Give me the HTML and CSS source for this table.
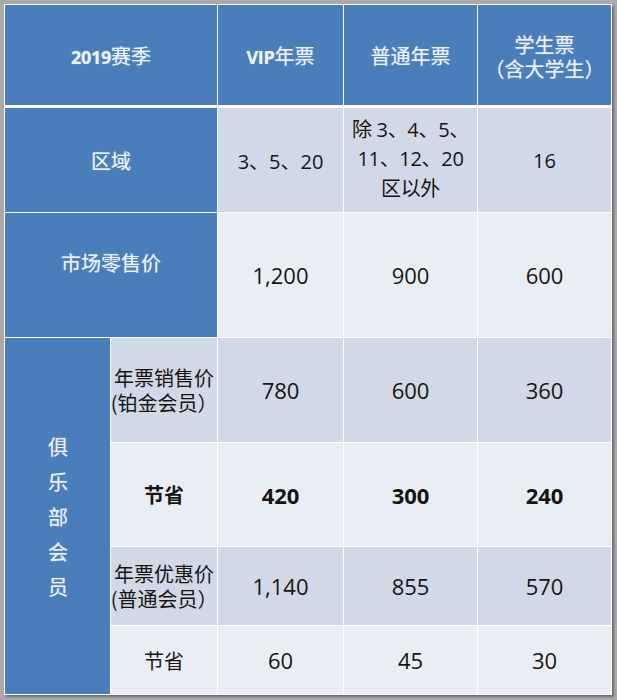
FILE: index.html
```html
<!DOCTYPE html>
<html lang="zh-CN">
<head>
<meta charset="utf-8">
<title>2019赛季 年票价格</title>
<link rel="stylesheet" href="styles.css">
</head>
<body>
<div class="frame">
  <div class="table">
    <div class="cell head span2"><span><b class="lat">2019</b>赛季</span></div>
    <div class="cell head"><span><b class="lat">VIP</b>年票</span></div>
    <div class="cell head"><span>普通年票</span></div>
    <div class="cell head two"><span>学生票<br>（含大学生）</span></div>

    <div class="cell side span2"><span>区域</span></div>
    <div class="cell dark">3、5、20</div>
    <div class="cell dark multi"><span>除 3、4、5、<br>11、12、20<br>区以外</span></div>
    <div class="cell dark">16</div>

    <div class="cell side span2 raise"><span>市场零售价</span></div>
    <div class="cell light num">1,200</div>
    <div class="cell light num">900</div>
    <div class="cell light num">600</div>

    <div class="cell side club"><span class="vert">俱乐部会员</span></div>
    <div class="cell dark label"><span>年票销售价<br>(铂金会员）</span></div>
    <div class="cell dark num">780</div>
    <div class="cell dark num">600</div>
    <div class="cell dark num">360</div>

    <div class="cell light label strong">节省</div>
    <div class="cell light num strong">420</div>
    <div class="cell light num strong">300</div>
    <div class="cell light num strong">240</div>

    <div class="cell dark label"><span>年票优惠价<br>(普通会员）</span></div>
    <div class="cell dark num">1,140</div>
    <div class="cell dark num">855</div>
    <div class="cell dark num">570</div>

    <div class="cell light label">节省</div>
    <div class="cell light num">60</div>
    <div class="cell light num">45</div>
    <div class="cell light num">30</div>
  </div>
</div>
</body>
</html>
```

FILE: styles.css
```css
html, body {
  margin: 0;
  padding: 0;
}

body {
  width: 617px;
  height: 700px;
  overflow: hidden;
  background: #a9a9a9;
  font-family: "Open Sans", "Noto Sans CJK SC", sans-serif;
  color: #151515;
}

.frame {
  padding: 4px 0 0 4px;
}

.table {
  display: grid;
  grid-template-columns: 105px 106px 125px 133px 133px;
  grid-template-rows: 102px 104px 124px 104px 103px 78px 68px;
  gap: 1px;
  width: max-content;
  background: #ffffff;
  border: 1px solid #ffffff;
  box-shadow: 2px 2px 2px rgba(60, 60, 60, 0.55);
}

.cell {
  display: flex;
  align-items: center;
  justify-content: center;
  text-align: center;
  font-size: 20px;
  white-space: nowrap;
  box-sizing: border-box;
}

.num {
  font-size: 22px;
}

.span2 {
  grid-column: span 2;
}

.head {
  background: #4a7ebb;
  color: #eef3fb;
  font-family: "Noto Sans CJK SC", sans-serif;
  font-size: 20px;
  border-bottom: 2px solid #ffffff;
  text-shadow: 0 0 1px rgba(255, 255, 255, 0.5);
}

.head .lat {
  font-family: "Open Sans", sans-serif;
  font-weight: 700;
  font-size: 18px;
  letter-spacing: -0.3px;
}

.head.two {
  line-height: 24px;
  padding-top: 4px;
}

.side {
  background: #4a7ebb;
  color: #eef3fb;
  font-family: "Noto Sans CJK SC", sans-serif;
  text-shadow: 0 0 1px rgba(255, 255, 255, 0.5);
}

.raise {
  padding-bottom: 26px;
}

.club {
  grid-row: span 4;
}

.vert {
  display: block;
  width: 20px;
  line-height: 35px;
  white-space: normal;
  word-break: break-all;
  padding-left: 1px;
}

.dark {
  background: #d1d8e6;
}

.light {
  background: #e9edf4;
}

.multi {
  line-height: 29.5px;
  padding-bottom: 2px;
  letter-spacing: -0.3px;
}

.label {
  font-family: "Noto Sans CJK SC", sans-serif;
  line-height: 25px;
  letter-spacing: 0;
}

.strong {
  font-weight: 700;
}
```
